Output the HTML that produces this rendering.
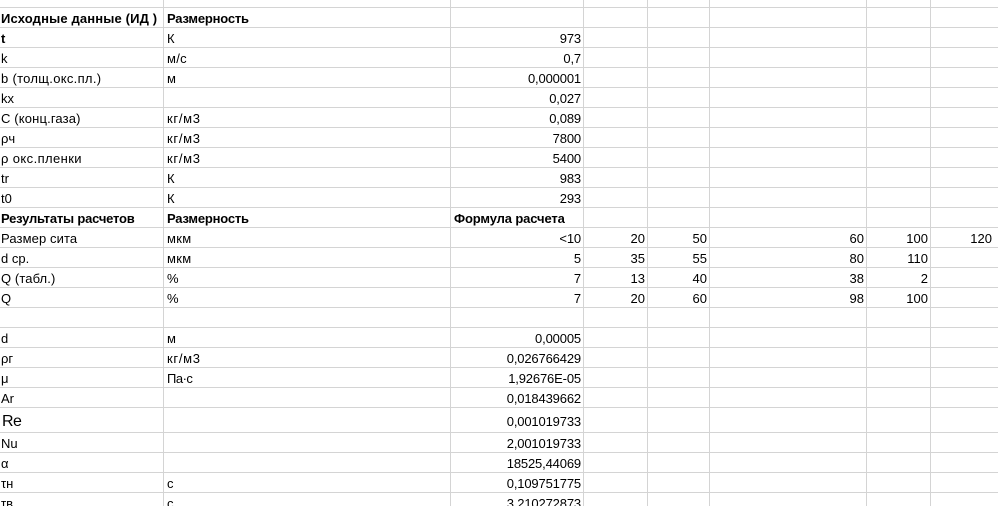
<!DOCTYPE html>
<html><head><meta charset="utf-8">
<style>
html,body{margin:0;padding:0;background:#fff}
#p{position:relative;width:998px;height:506px;overflow:hidden;background:#fff;font-family:"Liberation Sans",sans-serif;font-size:13px;color:#000}
.h,.v{position:absolute;background:#d4d4d4}
.h{left:0;width:998px;height:1px}
.v{top:0;width:1px;height:506px}
.r{position:absolute;left:0;width:998px;height:19px;line-height:19px;white-space:nowrap}
.r span{position:absolute;top:1px}
.a{left:1px}.b{left:167px}.f{left:454px}
.c{right:417px;letter-spacing:-.15px}.d{right:353px}.e{right:291px}.g{right:134px}.i{right:70px}.j{right:6px}
.B{font-weight:bold}
.k{letter-spacing:.7px}
</style></head><body><div id="p">
<div class="h" style="top:7px"></div><div class="h" style="top:27px"></div><div class="h" style="top:47px"></div><div class="h" style="top:67px"></div><div class="h" style="top:87px"></div><div class="h" style="top:107px"></div><div class="h" style="top:127px"></div><div class="h" style="top:147px"></div><div class="h" style="top:167px"></div><div class="h" style="top:187px"></div><div class="h" style="top:207px"></div><div class="h" style="top:227px"></div><div class="h" style="top:247px"></div><div class="h" style="top:267px"></div><div class="h" style="top:287px"></div><div class="h" style="top:307px"></div><div class="h" style="top:327px"></div><div class="h" style="top:347px"></div><div class="h" style="top:367px"></div><div class="h" style="top:387px"></div><div class="h" style="top:407px"></div><div class="h" style="top:432px"></div><div class="h" style="top:452px"></div><div class="h" style="top:472px"></div><div class="h" style="top:492px"></div>
<div class="v" style="left:163px"></div><div class="v" style="left:450px"></div><div class="v" style="left:583px"></div><div class="v" style="left:647px"></div><div class="v" style="left:709px"></div><div class="v" style="left:866px"></div><div class="v" style="left:930px"></div>

<div class="r" style="top:8px"><span class="a B" style="letter-spacing:.15px">Исходные данные (ИД )</span><span class="b B" style="letter-spacing:-.2px">Размерность</span></div>
<div class="r" style="top:28px"><span class="a B">t</span><span class="b">К</span><span class="c">973</span></div>
<div class="r" style="top:48px"><span class="a">k</span><span class="b" style="letter-spacing:.3px">м/с</span><span class="c">0,7</span></div>
<div class="r" style="top:68px"><span class="a" style="letter-spacing:.3px">b (толщ.окс.пл.)</span><span class="b">м</span><span class="c">0,000001</span></div>
<div class="r" style="top:88px"><span class="a">kx</span><span class="c">0,027</span></div>
<div class="r" style="top:108px"><span class="a" style="letter-spacing:.15px">C (конц.газа)</span><span class="b k">кг/м3</span><span class="c">0,089</span></div>
<div class="r" style="top:128px"><span class="a">ρч</span><span class="b k">кг/м3</span><span class="c">7800</span></div>
<div class="r" style="top:148px"><span class="a" style="letter-spacing:.4px">ρ окс.пленки</span><span class="b k">кг/м3</span><span class="c">5400</span></div>
<div class="r" style="top:168px"><span class="a">tr</span><span class="b">К</span><span class="c">983</span></div>
<div class="r" style="top:188px"><span class="a">t0</span><span class="b">К</span><span class="c">293</span></div>
<div class="r" style="top:208px"><span class="a B" style="letter-spacing:-.2px">Результаты расчетов</span><span class="b B" style="letter-spacing:-.2px">Размерность</span><span class="f B" style="letter-spacing:-.13px">Формула расчета</span></div>
<div class="r" style="top:228px"><span class="a" style="letter-spacing:.1px">Размер сита</span><span class="b" style="letter-spacing:.3px">мкм</span><span class="c">&lt;10</span><span class="d">20</span><span class="e">50</span><span class="g">60</span><span class="i">100</span><span class="j">120</span></div>
<div class="r" style="top:248px"><span class="a">d ср.</span><span class="b" style="letter-spacing:.3px">мкм</span><span class="c">5</span><span class="d">35</span><span class="e">55</span><span class="g">80</span><span class="i">110</span></div>
<div class="r" style="top:268px"><span class="a" style="letter-spacing:.1px">Q (табл.)</span><span class="b">%</span><span class="c">7</span><span class="d">13</span><span class="e">40</span><span class="g">38</span><span class="i">2</span></div>
<div class="r" style="top:288px"><span class="a">Q</span><span class="b">%</span><span class="c">7</span><span class="d">20</span><span class="e">60</span><span class="g">98</span><span class="i">100</span></div>
<div class="r" style="top:328px"><span class="a">d</span><span class="b">м</span><span class="c">0,00005</span></div>
<div class="r" style="top:348px"><span class="a">ρг</span><span class="b k">кг/м3</span><span class="c">0,026766429</span></div>
<div class="r" style="top:368px"><span class="a">μ</span><span class="b" style="letter-spacing:-.5px">Па·с</span><span class="c">1,92676E-05</span></div>
<div class="r" style="top:388px"><span class="a">Ar</span><span class="c">0,018439662</span></div>
<div class="r" style="top:408px;height:24px;line-height:24px"><span class="a" style="font-size:16px;top:2px;left:2px;letter-spacing:-.5px">Re</span><span class="c" style="line-height:25px">0,001019733</span></div>
<div class="r" style="top:433px"><span class="a">Nu</span><span class="c">2,001019733</span></div>
<div class="r" style="top:453px"><span class="a">α</span><span class="c">18525,44069</span></div>
<div class="r" style="top:473px"><span class="a">τн</span><span class="b">с</span><span class="c">0,109751775</span></div>
<div class="r" style="top:493px"><span class="a">τв</span><span class="b">с</span><span class="c">3,210272873</span></div>
</div></body></html>
